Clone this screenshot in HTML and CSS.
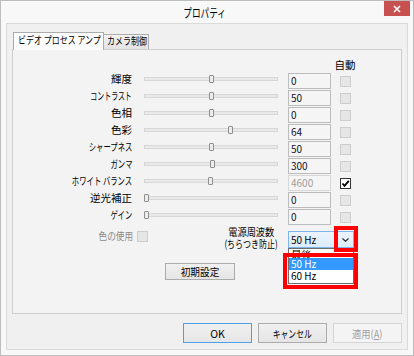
FILE: index.html
```html
<!DOCTYPE html>
<html lang="ja">
<head>
<meta charset="utf-8">
<title>プロパティ</title>
<link rel="stylesheet" href="styles.css">
</head>
<body>
<div class="window">
  <div class="titlebar">
    <span></span>
    <span class="title"><span class="sq sq-c sq-72">プロパティ</span></span>
    <span class="close"><svg width="8" height="8" viewBox="0 0 8 8"><path d="M1 1L7 7M7 1L1 7" stroke="#fff" stroke-width="1.6"/></svg></span>
  </div>
  <div class="client">
    <div class="tabs">
      <div class="tab active"><span class="sq sq-l sq-76">ビデオ プロセス アンプ</span></div>
      <div class="tab"><span class="sq sq-l sq-76">カメラ制御</span></div>
    </div>
    <div class="panel">
      <div class="grid">
        <div class="hdr">自動</div>

        <div class="label">輝度</div>
        <div class="slider"><div class="track"></div><div class="thumb" style="left:66px"></div></div>
        <div class="edit">0</div>
        <div class="chk"></div>

        <div class="label"><span class="sq sq-r sq-66">コントラスト</span></div>
        <div class="slider"><div class="track"></div><div class="thumb" style="left:66px"></div></div>
        <div class="edit">50</div>
        <div class="chk"></div>

        <div class="label">色相</div>
        <div class="slider"><div class="track"></div><div class="thumb" style="left:66px"></div></div>
        <div class="edit">0</div>
        <div class="chk"></div>

        <div class="label">色彩</div>
        <div class="slider"><div class="track"></div><div class="thumb" style="left:85px"></div></div>
        <div class="edit">64</div>
        <div class="chk"></div>

        <div class="label"><span class="sq sq-r sq-70">シャープネス</span></div>
        <div class="slider"><div class="track"></div><div class="thumb" style="left:66px"></div></div>
        <div class="edit">50</div>
        <div class="chk"></div>

        <div class="label"><span class="sq sq-r sq-70">ガンマ</span></div>
        <div class="slider"><div class="track"></div><div class="thumb" style="left:67px"></div></div>
        <div class="edit">300</div>
        <div class="chk"></div>

        <div class="label"><span class="sq sq-r sq-70">ホワイト バランス</span></div>
        <div class="slider"><div class="track"></div><div class="thumb" style="left:65px"></div></div>
        <div class="edit disabled">4600</div>
        <div class="chk checked"><svg width="9" height="9" viewBox="0 0 9 9"><path d="M1.5 4.5L3.5 6.8L7.8 1.8" fill="none" stroke="#000" stroke-width="1.8"/></svg></div>

        <div class="label">逆光補正</div>
        <div class="slider"><div class="track"></div><div class="thumb" style="left:1px"></div></div>
        <div class="edit">0</div>
        <div class="chk"></div>

        <div class="label"><span class="sq sq-r sq-70">ゲイン</span></div>
        <div class="slider"><div class="track"></div><div class="thumb" style="left:1px"></div></div>
        <div class="edit">0</div>
        <div class="chk"></div>
      </div>

      <div class="bottom">
        <div class="color-use"><span class="sq sq-r sq-82">色の使用</span><span class="chk small"></span></div>
        <div class="freq">
          <div class="freq-text">
            <span class="sq sq-c sq-88">電源周波数</span>
            <span class="sq sq-c sq-76">(ちらつき防止)</span>
          </div>
        </div>
        <div class="combo">
          <span class="combo-value">50 Hz</span>
          <span class="combo-arrow"><svg width="7" height="4" viewBox="0 0 7 4"><path d="M0.5 0.5L3.5 3.3L6.5 0.5" fill="none" stroke="#333" stroke-width="1.2"/></svg></span>
          <div class="dropdown">
            <div class="dd-item cut">最後</div>
            <div class="dd-item selected">50 Hz</div>
            <div class="dd-item">60 Hz</div>
          </div>
          <div class="mark mark-arrow"></div>
          <div class="mark mark-list"></div>
        </div>
      </div>

      <div class="reset-row"><button class="btn reset"><span class="sq sq-c sq-92">初期設定</span></button></div>
    </div>
    <div class="actions">
      <button class="btn default">OK</button>
      <button class="btn"><span class="sq sq-c sq-74">キャンセル</span></button>
      <button class="btn disabled"><span class="sq sq-c sq-88">適用(<u>A</u>)</span></button>
    </div>
  </div>
</div>
</body>
</html>
```

FILE: styles.css
```css
* { box-sizing: border-box; }

body {
  margin: 0;
  background: #ffffff;
  font-family: "Noto Sans CJK JP", "Noto Sans", sans-serif;
  font-size: 10.5px;
  color: #000;
}

/* horizontal condensing to mimic the narrow UI font */
.sq {
  display: inline-block;
  white-space: nowrap;
  transform: scaleX(var(--sx, 1));
}
.sq-l { transform-origin: left center; }
.sq-r { transform-origin: right center; }
.sq-c { transform-origin: center center; }
.sq-66 { --sx: 0.66; }
.sq-70 { --sx: 0.70; }
.sq-72 { --sx: 0.72; }
.sq-74 { --sx: 0.74; }
.sq-76 { --sx: 0.76; }
.sq-80 { --sx: 0.80; }
.sq-82 { --sx: 0.82; }
.sq-88 { --sx: 0.88; }
.sq-92 { --sx: 0.92; }

.window {
  width: 414px;
  height: 356px;
  border: 1px solid #bdbdbd;
  background: #f8f8f8;
  display: flex;
  flex-direction: column;
}

.titlebar {
  height: 22px;
  display: grid;
  grid-template-columns: 1fr auto 1fr;
  align-items: start;
}

.title {
  font-size: 12px;
  line-height: 24px;
  margin-left: -4px;
}

.close {
  justify-self: end;
  width: 26px;
  height: 15px;
  margin-right: 3px;
  background: #c75050;
  display: flex;
  align-items: center;
  justify-content: center;
}

.client {
  flex: 1;
  margin: 0 5px 5px 5px;
  background: #f0f0f0;
  border: 1px solid #dadada;
  padding: 8px 5px 0 5px;
  display: flex;
  flex-direction: column;
}

.tabs {
  display: flex;
  align-items: flex-end;
  height: 17px;
  padding-left: 1px;
}

.tab {
  width: 45px;
  height: 15px;
  border: 1px solid #acacac;
  border-bottom: none;
  border-left: none;
  background: linear-gradient(#f2f2f2, #e3e3e3);
  line-height: 12px;
  padding-left: 3px;
  white-space: nowrap;
}

.tab.active {
  width: 91px;
  height: 18px;
  margin-bottom: -1px;
  border-left: 1px solid #acacac;
  background: #fcfcfc;
  position: relative;
  z-index: 1;
  line-height: 14px;
  padding-left: 4px;
}

.panel {
  height: 265px;
  border: 1px solid #cfcfcf;
  background: #f3f3f3;
  padding: 8px 0 0 1px;
}

.grid {
  display: grid;
  grid-template-columns: 120px 136px 43px 13px;
  grid-template-rows: 14px;
  grid-auto-rows: 17px;
  column-gap: 9px;
  align-items: start;
}

.hdr {
  grid-column: 4;
  justify-self: center;
  white-space: nowrap;
  line-height: 14px;
  margin-right: 3px;
}

.label {
  text-align: right;
  padding-right: 2px;
  white-space: nowrap;
  line-height: 14px;
}

.slider {
  position: relative;
  height: 17px;
}

.track {
  position: absolute;
  left: 1px;
  right: 1px;
  top: 5px;
  height: 4px;
  background: #e9e9e9;
  border: 1px solid #d7d7d7;
}

.thumb {
  position: absolute;
  top: 3px;
  width: 5px;
  height: 8px;
  background: #ececec;
  border: 1px solid #8f8f8f;
  border-radius: 1px;
}

.edit {
  height: 16px;
  margin-top: 1px;
  border: 1px solid #bcbcbc;
  background: #f5f5f5;
  font-size: 10px;
  line-height: 14px;
  padding-left: 2px;
  color: #101030;
}

.edit.disabled {
  border-color: #d8d8d8;
  color: #9c9c9c;
}

.chk {
  width: 11px;
  height: 11px;
  margin-top: 4px;
  border: 1px solid #cdcdcd;
  background: #e6e6e6;
}

.chk.checked {
  border-color: #333;
  background: #fff;
  display: flex;
  align-items: center;
  justify-content: center;
}

.bottom {
  display: flex;
  align-items: flex-start;
  height: 26px;
  margin-top: 1px;
}

.color-use {
  width: 134px;
  height: 14px;
  margin-top: 3px;
  display: flex;
  justify-content: flex-end;
  align-items: center;
  gap: 4px;
  color: #8a8a8a;
  line-height: 14px;
}

.chk.small {
  margin-top: 0;
  flex: none;
}

.freq {
  width: 140px;
  flex: none;
  display: flex;
  justify-content: flex-end;
  padding-right: 10px;
}

.freq-text {
  width: 54px;
  display: flex;
  flex-direction: column;
  align-items: center;
  line-height: 12px;
}

.combo {
  width: 66px;
  height: 17px;
  flex: none;
  margin-top: 5px;
  position: relative;
  border: 1px solid #7eb4ea;
  background: linear-gradient(#ecf4fc, #dcecfc);
  display: flex;
  align-items: center;
  justify-content: space-between;
}

.combo-value {
  padding-left: 2px;
  font-size: 10px;
}

.combo-arrow {
  width: 15px;
  display: flex;
  justify-content: center;
  padding-top: 1px;
}

.dropdown {
  position: absolute;
  left: -1px;
  top: 16px;
  width: 66px;
  height: 36px;
  background: #fff;
  border: 1px solid #6e6e6e;
  z-index: 2;
}

.dd-item {
  height: 12px;
  line-height: 12px;
  padding-left: 2px;
  font-size: 10px;
}

.dd-item.cut {
  height: 9px;
  overflow: hidden;
  font-size: 10.5px;
  line-height: 11px;
}

.dd-item.selected {
  background: #3399ff;
  color: #fff;
}

.mark {
  position: absolute;
  border: 4px solid #ff0000;
  z-index: 3;
}

.mark-arrow {
  left: 45px;
  top: -6px;
  width: 24px;
  height: 26px;
}

.mark-list {
  left: -6px;
  top: 21px;
  width: 75px;
  height: 36px;
}

.reset-row {
  margin-top: 11px;
  padding-left: 151px;
}

.btn {
  font: inherit;
  color: #000;
  border: 1px solid #acacac;
  background: linear-gradient(#f0f0f0, #e5e5e5);
  padding: 0;
  white-space: nowrap;
}

.btn.reset {
  width: 70px;
  height: 17px;
  line-height: 14px;
}

.actions {
  display: flex;
  justify-content: flex-end;
  gap: 6px;
  margin-top: 9px;
}

.actions .btn {
  width: 69px;
  height: 20px;
}

.btn.default {
  border-color: #4d9fe8;
  background: linear-gradient(#f0f0f0, #e6e6e6);
}

.btn.disabled {
  border-color: #d5d5d5;
  background: #f4f4f4;
  color: #a0a0a0;
}
```
